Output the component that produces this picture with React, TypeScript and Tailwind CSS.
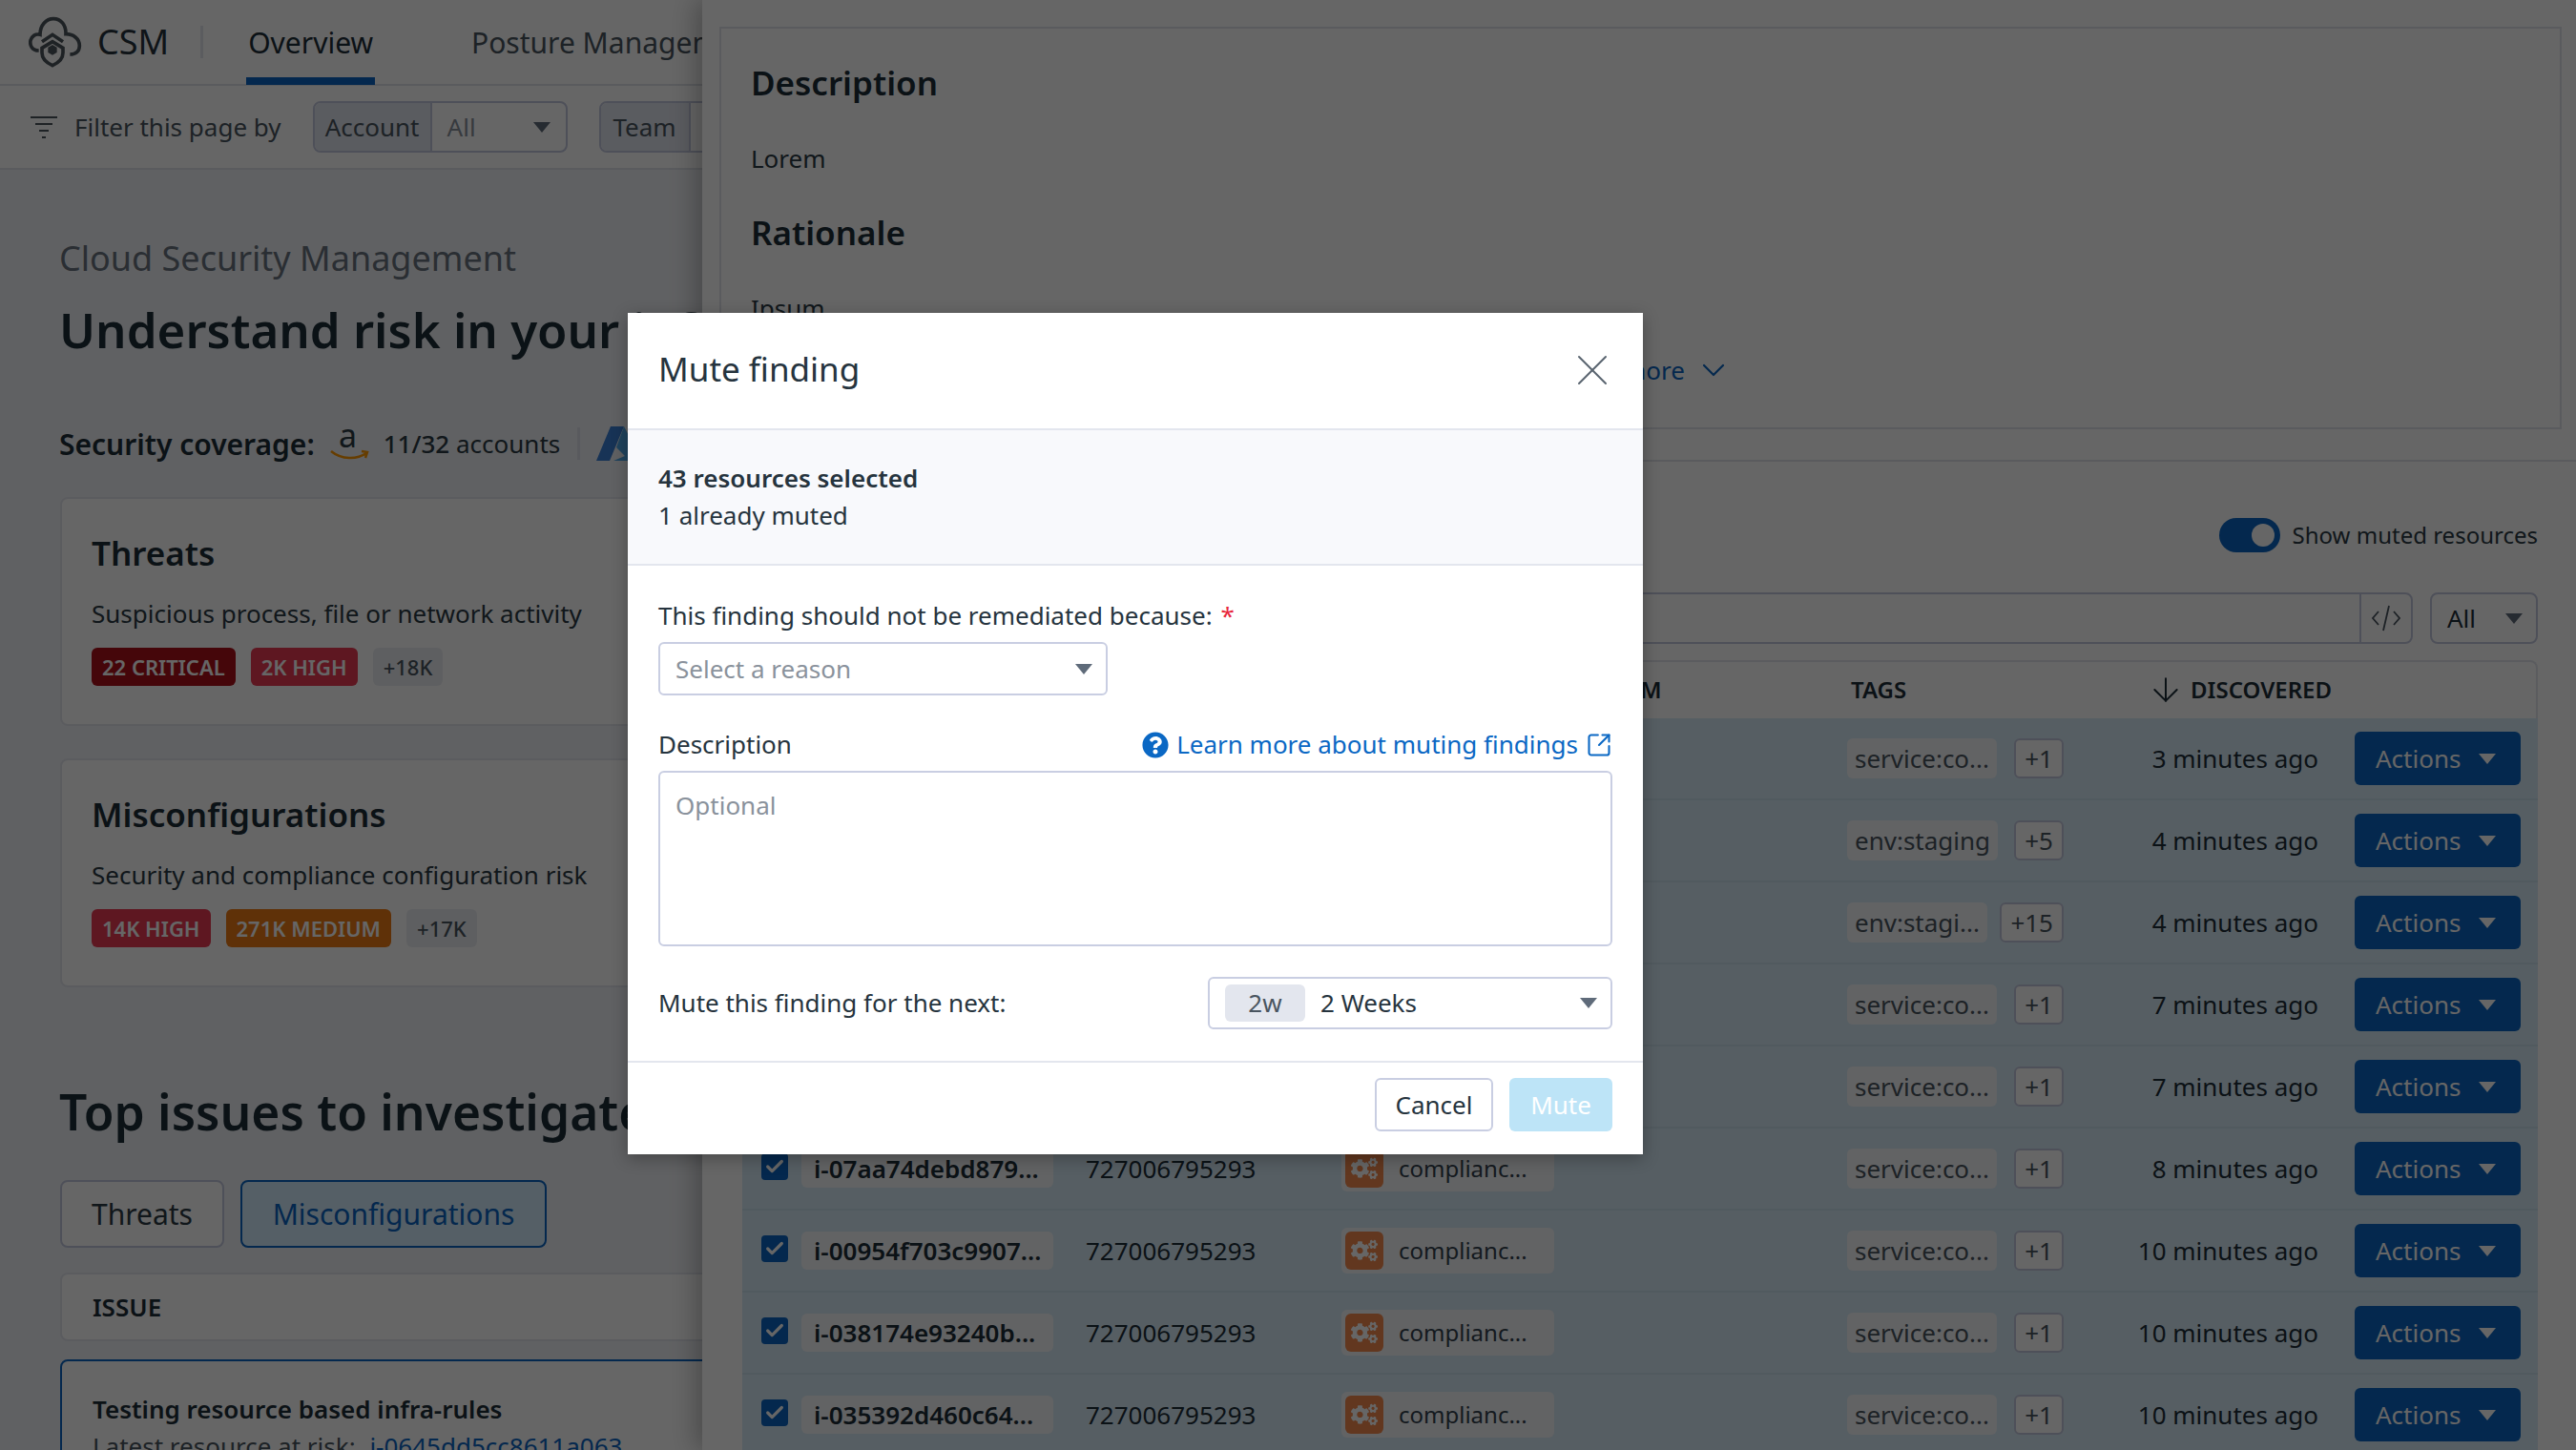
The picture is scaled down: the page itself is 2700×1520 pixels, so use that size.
import { X, ChevronDown, ArrowDown, SquareArrowOutUpRight, Check } from "lucide-react";
import { FaCogs, FaQuestionCircle } from "react-icons/fa";

const rows = [
  { id: "", tag: "service:co...", more: "+1", time: "3 minutes ago" },
  { id: "", tag: "env:staging", more: "+5", time: "4 minutes ago" },
  { id: "", tag: "env:stagi...", more: "+15", time: "4 minutes ago" },
  { id: "", tag: "service:co...", more: "+1", time: "7 minutes ago" },
  { id: "", tag: "service:co...", more: "+1", time: "7 minutes ago" },
  { id: "i-07aa74debd879...", tag: "service:co...", more: "+1", time: "8 minutes ago" },
  { id: "i-00954f703c9907...", tag: "service:co...", more: "+1", time: "10 minutes ago" },
  { id: "i-038174e93240b...", tag: "service:co...", more: "+1", time: "10 minutes ago" },
  { id: "i-035392d460c64...", tag: "service:co...", more: "+1", time: "10 minutes ago" },
];

function Caret({ className }: { className?: string }) {
  return (
    <svg viewBox="0 0 18 11" className={className ?? "w-[18px] h-[11px] fill-[#5f6b7a]"}>
      <path d="M0 0h18L9 11z" />
    </svg>
  );
}

function CsmLogo() {
  return (
    <svg viewBox="30 22 168 162" className="w-[56px] h-[54px] fill-none stroke-[#4d565c] stroke-[11]">
      <path d="M62 130C40 130 33 112 36 98 40 84 52 76 66 80 66 50 85 30 108 30 132 30 148 50 147 78 170 78 190 92 190 115 190 132 178 142 160 142" />
      <path d="M72 102L105 80 138 102" />
      <path d="M72 122v15c0 20 15 32 33 40 18-8 33-20 33-40v-15l-33-20z" />
      <path d="M105 112l14 8v16l-14 8-14-8v-16z" className="fill-[#4d565c] stroke-none" />
    </svg>
  );
}

function Badge({ text, color }: { text: string; color: string }) {
  return <span className={`h-[40px] px-[11px] flex items-center rounded-[6px] text-[22px] font-semibold text-white ${color}`}>{text}</span>;
}

function SummaryCard({ title, desc, badges, more }: { title: string; desc: string; badges: { text: string; color: string }[]; more: string }) {
  return (
    <div className="w-[1300px] h-[240px] bg-white border-2 border-[#e3e6ee] rounded-[8px] pl-[31px] pt-[31px]">
      <h2 className="text-[35px] leading-[52px] font-semibold text-[#1d2d38]">{title}</h2>
      <p className="mt-[18px] text-[26px] leading-[38px] text-[#2b3a44]">{desc}</p>
      <div className="mt-[17px] flex gap-[16px]">
        {badges.map((b) => (
          <Badge key={b.text} text={b.text} color={b.color} />
        ))}
        <span className="h-[40px] px-[11px] flex items-center rounded-[6px] text-[22px] font-medium text-[#4a5560] bg-[#eceef3]">{more}</span>
      </div>
    </div>
  );
}

function LeftPane() {
  return (
    <div className="w-[736px] shrink-0 overflow-hidden bg-[#f1f3f7]">
      <div className="w-[2000px]">
        <div className="h-[90px] bg-white border-b-2 border-[#e0e3ea] flex items-center pl-[30px]">
          <CsmLogo />
          <span className="ml-[16px] text-[36px] text-[#26343e]">CSM</span>
          <span className="ml-[33px] w-[3px] h-[34px] bg-[#e3e6ee]" />
          <div className="ml-[45px] h-[90px] flex items-center relative">
            <span className="px-[2px] text-[30px] text-[#1d2d38]">Overview</span>
            <span className="absolute left-0 right-0 bottom-0 h-[8px] bg-[#0b65c2]" />
          </div>
          <span className="ml-[101px] text-[30px] text-[#4a5560]">Posture Management</span>
        </div>
        <div className="h-[88px] bg-white border-b-2 border-[#e0e3ea] flex items-center pl-[32px]">
          <svg viewBox="0 0 28 24" className="w-[28px] h-[24px] stroke-[#4d565c] stroke-2">
            <path d="M0 2h28M5 9h18M9 16h10M12 23h4" />
          </svg>
          <span className="ml-[18px] text-[26px] text-[#4a5560]">Filter this page by</span>
          <div className="ml-[33px] w-[267px] h-[54px] border-2 border-[#c3c8de] rounded-[8px] flex items-center overflow-hidden">
            <span className="w-[123px] h-full bg-[#e2e5ef] border-r-2 border-[#c3c8de] flex items-center justify-center text-[26px] text-[#4a5560]">Account</span>
            <span className="ml-[16px] text-[26px] text-[#8a929c]">All</span>
            <Caret className="ml-auto mr-[16px] w-[18px] h-[11px] fill-[#5f6b7a]" />
          </div>
          <div className="ml-[33px] w-[267px] h-[54px] border-2 border-[#c3c8de] rounded-[8px] flex items-center overflow-hidden">
            <span className="w-[94px] h-full bg-[#e2e5ef] border-r-2 border-[#c3c8de] flex items-center justify-center text-[26px] text-[#4a5560]">Team</span>
          </div>
        </div>
        <div className="pl-[62px]">
          <p className="mt-[68px] text-[36px] leading-[50px] text-[#6a7480]">Cloud Security Management</p>
          <h1 className="mt-[11px] text-[51px] leading-[76px] font-semibold text-[#1d2d38] whitespace-nowrap">Understand risk in your infrastructure</h1>
          <div className="mt-[62px] h-[40px] flex items-center">
            <span className="text-[30px] font-semibold text-[#1d2d38]">Security coverage:</span>
            <svg viewBox="0 0 42 40" className="ml-[16px] w-[42px] h-[40px]">
              <text x="9" y="24" fontSize="34" fontFamily="Noto Sans" fill="#2b3a44">a</text>
              <path d="M1 28c11 9 27 9 37 2M33 28l6 1-2 6" fill="none" stroke="#ff9900" strokeWidth="2.5" />
            </svg>
            <span className="ml-[14px] text-[26px] text-[#2b3a44]"><span className="font-medium">11/32</span> accounts</span>
            <span className="ml-[18px] w-[3px] h-[34px] bg-[#dfe2ea]" />
            <svg viewBox="0 0 48 36" className="ml-[17px] w-[48px] h-[36px]">
              <path d="M15 0h14L14 36H0z" fill="#3a7fd6" />
              <path d="M29 0l19 36H18l12-5-9-9 8-22z" fill="#4fa8e8" />
            </svg>
          </div>
        </div>
        <div className="pl-[63px] mt-[36px] flex flex-col gap-[34px]">
          <SummaryCard
            title="Threats"
            desc="Suspicious process, file or network activity"
            more="+18K"
            badges={[
              { text: "22 CRITICAL", color: "bg-[#ad0f1b]" },
              { text: "2K HIGH", color: "bg-[#ea3a54]" },
            ]}
          />
          <SummaryCard
            title="Misconfigurations"
            desc="Security and compliance configuration risk"
            more="+17K"
            badges={[
              { text: "14K HIGH", color: "bg-[#ea3a54]" },
              { text: "271K MEDIUM", color: "bg-[#ee7a14]" },
            ]}
          />
        </div>
        <div className="pl-[63px]">
          <h2 className="-ml-[1px] mt-[92px] text-[51.5px] leading-[76px] font-semibold text-[#1d2d38] whitespace-nowrap">Top issues to investigate</h2>
          <div className="mt-[34px] flex gap-[17px]">
            <span className="w-[172px] h-[71px] bg-white border-2 border-[#c3c8de] rounded-[8px] flex items-center justify-center text-[30px] text-[#2b3a44]">Threats</span>
            <span className="w-[321px] h-[71px] bg-[#d4edff] border-2 border-[#0b65c2] rounded-[8px] flex items-center justify-center text-[30px] text-[#0b65c2]">Misconfigurations</span>
          </div>
          <div className="mt-[26px] h-[72px] bg-white border-2 border-[#e3e6ee] rounded-[8px] pl-[32px] flex items-center text-[26px] font-semibold text-[#1d2d38]">ISSUE</div>
          <div className="mt-[19px] bg-white border-2 border-[#0b65c2] rounded-[8px] pl-[32px] pt-[31px] h-[200px]">
            <p className="text-[26px] leading-[38px] font-semibold text-[#1d2d38]">Testing resource based infra-rules</p>
            <p className="mt-[2px] text-[26px] leading-[36px] text-[#4a5560]">
              Latest resource at risk: <span className="ml-[8px] text-[#0b65c2]">i-0645dd5cc8611a063</span>
            </p>
          </div>
        </div>
      </div>
    </div>
  );
}

function Row({ id, tag, more, time }: { id: string; tag: string; more: string; time: string }) {
  return (
    <div className="h-[86px] shrink-0 bg-[#d8ecf8] border-b-2 border-[#cbe0ee] flex items-center pl-[20px] text-[26px] text-[#1d2d38]">
      <span className="w-[28px] h-[28px] -mt-[4px] mr-[14px] rounded-[4px] bg-[#0b65c2] flex items-center justify-center">
        <Check className="w-[22px] h-[22px] text-white" strokeWidth={3.5} />
      </span>
      <span className="w-[264px] h-[40px] mr-[34px] px-[13px] rounded-[6px] bg-[#f6f7f9] flex items-center font-semibold whitespace-nowrap overflow-hidden">{id}</span>
      <span className="w-[268px]">727006795293</span>
      <span className="w-[223px] h-[48px] rounded-[6px] bg-[#f6f7f9] flex items-center pl-[4px]">
        <span className="w-[40px] h-[40px] rounded-[6px] bg-[#f58a4e] flex items-center justify-center">
          <FaCogs className="w-[28px] h-[28px] text-white" />
        </span>
        <span className="ml-[16px] text-[24px] text-[#33424e]">complianc...</span>
      </span>
      <span className="w-[307px]" />
      <span className="w-[227px] flex items-center justify-between">
        <span className="h-[42px] px-[8px] rounded-[6px] bg-[#f6f7f9] flex items-center text-[#4a5560]">{tag}</span>
        <span className="h-[42px] w-[auto] min-w-[50px] px-[9px] rounded-[6px] bg-white border-2 border-[#c3c8de] flex items-center justify-center text-[#4a5560]">{more}</span>
      </span>
      <span className="w-[267px] text-right">{time}</span>
      <span className="ml-[38px] w-[174px] h-[56px] rounded-[6px] bg-[#0b65c2] flex items-center pl-[22px] gap-[19px] text-white">
        Actions
        <Caret className="w-[18px] h-[11px] fill-white" />
      </span>
    </div>
  );
}

function Drawer() {
  return (
    <div className="flex-1 bg-white shadow-[-8px_0_24px_rgba(0,0,0,0.25)] z-10 flex flex-col overflow-hidden">
      <div className="mt-[28px] ml-[18px] mr-[15px] h-[422px] shrink-0 border-2 border-[#e0e3ea] pl-[31px] pt-[31px] text-[#1d2d38]">
        <h2 className="text-[35px] leading-[52px] font-semibold">Description</h2>
        <p className="mt-[34px] text-[26px] leading-[38px] text-[#2b3a44]">Lorem</p>
        <h2 className="mt-[33px] text-[35px] leading-[52px] font-semibold">Rationale</h2>
        <p className="mt-[34px] text-[26px] leading-[38px] text-[#2b3a44]">Ipsum</p>
        <div className="mt-[26px] pr-[26px] flex justify-center items-center gap-[10px] text-[26px] text-[#0b65c2]">
          Show more
          <ChevronDown className="w-[40px] h-[40px]" strokeWidth={1.3} />
        </div>
      </div>
      <div className="mt-[32px] border-t-2 border-[#e0e3ea] flex-1 pl-[42px] pr-[40px] flex flex-col">
        <div className="mt-[59px] h-[36px] flex items-center justify-end">
          <span className="w-[64px] h-[36px] rounded-full bg-[#0b65c2] flex items-center justify-end pr-[6px]">
            <span className="w-[24px] h-[24px] rounded-full bg-white" />
          </span>
          <span className="ml-[13px] text-[24px] text-[#2b3a44]">Show muted resources</span>
        </div>
        <div className="mt-[42px] flex gap-[18px]">
          <div className="flex-1 h-[54px] bg-white border-2 border-[#c3c8de] rounded-[8px] flex justify-end">
            <span className="w-[54px] border-l-2 border-[#c3c8de] flex items-center justify-center text-[#4a5560]">
              <svg viewBox="0 0 32 30" className="w-[32px] h-[30px] fill-none stroke-[#4a5560] stroke-[1.8]">
                <path d="M8 8l-6 7 6 7M24 8l6 7-6 7M19 2l-6 26" />
              </svg>
            </span>
          </div>
          <div className="w-[113px] h-[54px] bg-white border-2 border-[#c3c8de] rounded-[8px] flex items-center pl-[16px] text-[26px] text-[#1d2d38]">
            All
            <Caret className="ml-auto mr-[14px] w-[18px] h-[11px] fill-[#5f6b7a]" />
          </div>
        </div>
        <div className="mt-[17px] h-[61px] shrink-0 bg-white border-2 border-b-0 border-[#e3e6ee] rounded-t-[8px] flex items-center pb-[2px] text-[24px] font-semibold text-[#1d2d38] pl-[896px]">
          <span className="w-[264px]">TEAM</span>
          <span className="w-[310px]">TAGS</span>
          <ArrowDown className="w-[40px] h-[40px]" strokeWidth={1.2} />
          <span className="ml-[6px]">DISCOVERED</span>
        </div>
        <div className="flex flex-col">
          {rows.map((r, i) => (
            <Row key={i} {...r} />
          ))}
        </div>
      </div>
    </div>
  );
}

function MuteModal() {
  return (
    <div className="absolute left-[658px] top-[328px] w-[1064px] h-[882px] bg-white shadow-[0_4px_16px_rgba(0,0,0,0.3)] z-30 flex flex-col text-[26px] text-[#26343e]">
      <div className="h-[121px] shrink-0 flex items-center justify-between pl-[32px] pr-[25px] pb-[2px]">
        <span className="text-[35px]">Mute finding</span>
        <X className="w-[56px] h-[56px] text-[#5a6570]" strokeWidth={0.85} />
      </div>
      <div className="h-[144px] shrink-0 bg-[#f8f9fc] border-y-2 border-[#e3e6ee] pl-[32px] pb-[2px] flex flex-col justify-center gap-[3px]">
        <span className="font-semibold leading-[36px]">43 resources selected</span>
        <span className="leading-[36px]">1 already muted</span>
      </div>
      <div className="px-[32px] flex-1">
        <div className="mt-[34px] leading-[36px]">
          This finding should not be remediated because: <span className="text-[#e8273c] ml-[2px]">*</span>
        </div>
        <div className="mt-[10px] w-[471px] h-[56px] border-2 border-[#c9cee2] rounded-[6px] flex items-center pl-[16px] text-[#8a929c]">
          Select a reason
          <Caret className="ml-auto mr-[14px] w-[18px] h-[11px] fill-[#5f6b7a]" />
        </div>
        <div className="mt-[33px] flex items-center justify-between h-[36px]">
          <span>Description</span>
          <span className="flex items-center text-[#0b68c4] pt-[1px]">
            <FaQuestionCircle className="w-[28px] h-[28px]" />
            <span className="ml-[8px]">Learn more about muting findings</span>
            <SquareArrowOutUpRight className="ml-[8px] w-[28px] h-[28px]" strokeWidth={1.8} />
          </span>
        </div>
        <div className="mt-[10px] h-[184px] border-2 border-[#c9cee2] rounded-[6px] pl-[16px] pt-[16px] leading-[36px] text-[#8a929c]">Optional</div>
        <div className="mt-[32px] flex items-center justify-between">
          <span>Mute this finding for the next:</span>
          <div className="w-[424px] h-[55px] border-2 border-[#c9cee2] rounded-[6px] flex items-center pl-[16px]">
            <span className="w-[84px] h-[39px] rounded-[6px] bg-[#e3e6ee] flex items-center justify-center text-[#4a5560]">2w</span>
            <span className="ml-[16px]">2 Weeks</span>
            <Caret className="ml-auto mr-[14px] w-[18px] h-[11px] fill-[#5f6b7a]" />
          </div>
        </div>
      </div>
      <div className="h-[98px] shrink-0 border-t-2 border-[#e3e6ee] flex items-start justify-end gap-[17px] pr-[32px] pt-[16px]">
        <span className="w-[124px] h-[56px] border-2 border-[#c9cee2] rounded-[6px] flex items-center justify-center">Cancel</span>
        <span className="w-[108px] h-[56px] bg-[#bde4f7] rounded-[6px] flex items-center justify-center text-white">Mute</span>
      </div>
    </div>
  );
}

export default function App() {
  return (
    <div className="relative w-[2700px] h-[1520px] overflow-hidden flex bg-white font-['Noto_Sans',sans-serif]">
      <LeftPane />
      <Drawer />
      <div className="absolute inset-0 bg-black/60 z-20" />
      <MuteModal />
    </div>
  );
}
